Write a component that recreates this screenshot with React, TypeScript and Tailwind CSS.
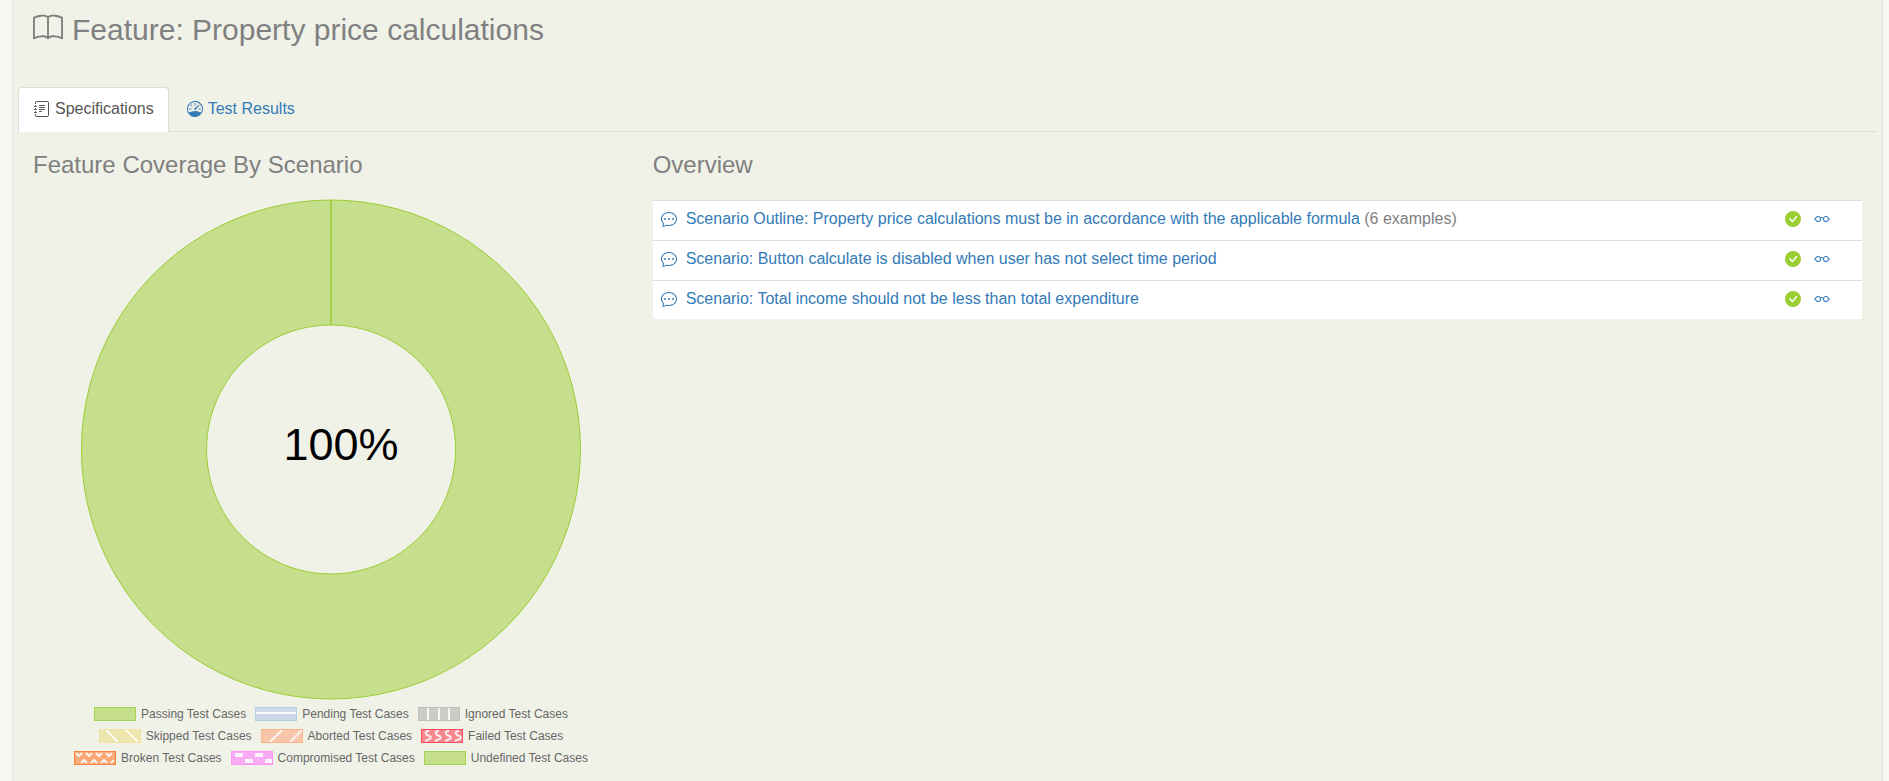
import type { ReactNode } from "react";
import {
  BsBook,
  BsChatDots,
  BsCheckCircleFill,
  BsEyeglasses,
  BsJournalText,
  BsSpeedometer,
} from "react-icons/bs";

type LegendItem = { label: string; stroke: string; fill: string; pattern?: ReactNode };

const line = { stroke: "#fff", strokeOpacity: 0.85, fill: "none", strokeWidth: 2 };

const legendRows: LegendItem[][] = [
  [
    { label: "Passing Test Cases", stroke: "#a5d44e", fill: "#c5df8d" },
    {
      label: "Pending Test Cases",
      stroke: "#b3cfea",
      fill: "#cbd9e8",
      pattern: <path d="M1 6H41" {...line} />,
    },
    {
      label: "Ignored Test Cases",
      stroke: "#bfbfbb",
      fill: "#cbccc6",
      pattern: <path d="M10 1V13M21 1V13M31 1V13" {...line} />,
    },
  ],
  [
    {
      label: "Skipped Test Cases",
      stroke: "#eee3a4",
      fill: "#eee5ac",
      pattern: <path d="M7 1L19 13M27 1L39 13" {...line} />,
    },
    {
      label: "Aborted Test Cases",
      stroke: "#ffb18a",
      fill: "#f8c6aa",
      pattern: <path d="M9 13L21 1M29 13L41 1" {...line} />,
    },
    {
      label: "Failed Test Cases",
      stroke: "#fb4d5c",
      fill: "#f88790",
      pattern: (
        <path
          d="M8 2C4 2 4 5 6 6C9 7 11 8 9 10L4 12M18 2C14 2 14 5 16 6C19 7 21 8 19 10L14 12M28 2C24 2 24 5 26 6C29 7 31 8 29 10L24 12M38 2C34 2 34 5 36 6C39 7 41 8 39 10L34 12"
          {...line}
        />
      ),
    },
  ],
  [
    {
      label: "Broken Test Cases",
      stroke: "#ff8240",
      fill: "#f9a878",
      pattern: (
        <path
          d="M2 2L5 5L8 2M12 2L15 5L18 2M22 2L25 5L28 2M32 2L35 5L38 2M7 12L10 9L13 12M17 12L20 9L23 12M27 12L30 9L33 12M37 12L40 9"
          {...line}
        />
      ),
    },
    {
      label: "Compromised Test Cases",
      stroke: "#fb94f5",
      fill: "#f8aaf4",
      pattern: (
        <path d="M4 2H12V6H4ZM24 2H32V6H24ZM14 8H22V12H14ZM34 8H41V12H34Z" fill="#fff" fillOpacity={0.85} />
      ),
    },
    { label: "Undefined Test Cases", stroke: "#a5d44e", fill: "#c5df8d" },
  ],
];

const scenarios = [
  {
    title: "Scenario Outline: Property price calculations must be in accordance with the applicable formula",
    note: "(6 examples)",
  },
  { title: "Scenario: Button calculate is disabled when user has not select time period" },
  { title: "Scenario: Total income should not be less than total expenditure" },
];

function CoverageChart() {
  return (
    <figure className="w-[596px] max-w-full">
      <svg viewBox="0 0 596 501" className="block w-full" role="img" aria-label="100% passing">
        <path
          fillRule="evenodd"
          d="M298 1A249.5 249.5 0 1 1 297.9 1ZM298 126A124.5 124.5 0 1 0 298.1 126Z"
          fill="#c5df8d"
          stroke="#9acd32"
        />
        <path d="M298 1V126" stroke="#a3d248" strokeWidth="2" />
        <text x="308" y="261" textAnchor="middle" fontSize="45" fill="#000">
          100%
        </text>
      </svg>
      <figcaption className="flex flex-col items-center pt-[3px]">
        {legendRows.map((row) => (
          <div key={row[0].label} className="flex h-[22px] items-center gap-[9px]">
            {row.map((item) => (
              <span key={item.label} className="flex items-center gap-[5px] text-xs whitespace-nowrap text-[#666]">
                <svg width="42" height="14" viewBox="0 0 42 14" aria-hidden="true">
                  <rect x="0.5" y="0.5" width="41" height="13" fill={item.fill} />
                  {item.pattern}
                  <rect x="0.5" y="0.5" width="41" height="13" fill="none" stroke={item.stroke} />
                </svg>
                {item.label}
              </span>
            ))}
          </div>
        ))}
      </figcaption>
    </figure>
  );
}

export default function App() {
  return (
    <div className="min-h-screen bg-[#f7f8f3] pr-[6px] pl-3 font-['Liberation_Sans',Arial,sans-serif] text-base text-[#808080]">
      <main className="min-h-screen border-x border-[#e3e4dd] bg-[#f0f2e8] px-[5px]">
        <h1 className="flex h-[87px] items-start gap-[9px] pt-[13px] pl-[15px] text-[30px] leading-[33px]">
          <BsBook aria-hidden="true" />
          Feature: Property price calculations
        </h1>
        <nav className="flex border-b border-[#ddd]">
          <a
            href="#specifications"
            aria-current="page"
            className="-mb-px flex h-[45px] items-center gap-[5px] rounded-t border border-b-0 border-[#ddd] bg-white pr-[14px] pb-[2px] pl-[15px] text-[#555]"
          >
            <BsJournalText aria-hidden="true" />
            Specifications
          </a>
          <a href="#results" className="flex h-11 items-center gap-[5px] px-[18px] text-[#337ab7]">
            <BsSpeedometer aria-hidden="true" />
            Test Results
          </a>
        </nav>
        <div className="grid grid-cols-3 pt-[20px]">
          <section className="pl-[15px]">
            <h2 className="mb-[21px] text-2xl leading-[26px]">Feature Coverage By Scenario</h2>
            <CoverageChart />
          </section>
          <section className="col-span-2 px-[15px]">
            <h2 className="mb-[21px] text-2xl leading-[26px]">Overview</h2>
            <table className="mt-[22px] w-full border-separate border-spacing-0 bg-white">
              <tbody>
                {scenarios.map((s) => (
                  <tr key={s.title} className="h-10 last:h-[39px]">
                    <td className="border-t border-[#ddd] pb-[3px] pl-2">
                      <span className="flex items-center gap-[9px]">
                        <BsChatDots aria-hidden="true" className="text-[#337ab7]" />
                        <span>
                          <a href="#scenario" className="text-[#337ab7]">
                            {s.title}
                          </a>{" "}
                          {s.note}
                        </span>
                      </span>
                    </td>
                    <td className="w-[77px] border-t border-[#ddd] pb-[3px]">
                      <span className="flex items-center gap-[13px]">
                        <BsCheckCircleFill aria-label="Passed" className="text-[#9acd32]" />
                        <a href="#details" aria-label="View details" className="text-[#337ab7]">
                          <BsEyeglasses />
                        </a>
                      </span>
                    </td>
                  </tr>
                ))}
              </tbody>
            </table>
          </section>
        </div>
      </main>
    </div>
  );
}
